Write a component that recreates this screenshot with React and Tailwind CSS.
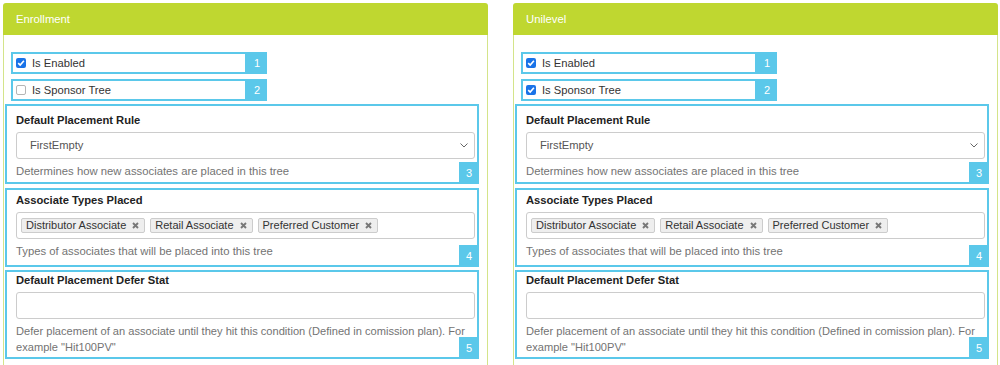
import React from 'react';

const font = { fontFamily: '"Liberation Sans", Arial, sans-serif' };

function Badge({ n, className = '' }) {
  return (
    <div className={`w-[20px] h-[22px] shrink-0 bg-[#5bc8ea] text-white text-[11px] flex items-center justify-center ${className}`}>
      {n}
    </div>
  );
}

function Check({ checked }) {
  if (!checked) {
    return <span className="w-[10px] h-[10px] shrink-0 rounded-[2px] border border-[#b5b5b5] bg-white inline-block" />;
  }
  return (
    <span className="w-[10px] h-[10px] shrink-0 rounded-[2px] bg-[#1a73e8] inline-flex items-center justify-center">
      <svg width="8" height="8" viewBox="0 0 8 8">
        <path d="M1.2 4.2 L3.2 6.1 L6.9 1.8" fill="none" stroke="white" strokeWidth="1.6" />
      </svg>
    </span>
  );
}

function CheckRow({ n, label, checked }) {
  return (
    <div className="flex shrink-0 ml-[6px]">
      <div className="w-[236px] h-[22px] border-2 border-[#5bc8ea] flex items-center pl-[3px] gap-[6px]">
        <Check checked={checked} />
        <span className="text-[11.2px] text-[#333]">{label}</span>
      </div>
      <Badge n={n} />
    </div>
  );
}

function Section({ n, className, children }) {
  return (
    <div className={`relative shrink-0 border-2 border-[#5bc8ea] pl-[9px] pr-[2px] ${className}`}>
      {children}
      <Badge n={n} className="absolute right-[-2px] bottom-[-2px]" />
    </div>
  );
}

function Tag({ text }) {
  return (
    <span className="h-[15px] flex items-center border border-[#ccc] bg-[#eee] rounded-[2px] pl-[4px] pr-[5px] text-[11px] text-[#333]">
      {text}
      <svg className="ml-[6px]" width="7" height="7" viewBox="0 0 7 7">
        <path d="M1 1 L6 6 M6 1 L1 6" stroke="#777" strokeWidth="1.9" />
      </svg>
    </span>
  );
}

function Panel({ title, sponsor }) {
  return (
    <div className="w-[485px] flex flex-col">
      <div className="h-[32px] shrink-0 bg-[#bfd730] rounded-t-[3px] flex items-center pl-[13px] text-white text-[11.3px]">
        {title}
      </div>
      <div className="flex-1 min-h-0 border-x border-[#d4e48a] pt-[17px] pl-[1px] pr-[8px] flex flex-col">
        <CheckRow n="1" label="Is Enabled" checked />
        <div className="h-[5px] shrink-0" />
        <CheckRow n="2" label="Is Sponsor Tree" checked={sponsor} />
        <div className="h-[3px] shrink-0" />
        <Section n="3" className="pt-[6px] pb-[3px]">
          <div className="text-[11.2px] leading-[16px] font-bold text-[#222]">Default Placement Rule</div>
          <div className="mt-[4px] h-[27px] border border-[#ccc] rounded-[3px] flex items-center justify-between pl-[13px] pr-[6px]">
            <span className="text-[11.2px] text-[#555]">FirstEmpty</span>
            <svg width="8" height="5" viewBox="0 0 8 5">
              <path d="M0.5 0.5 L4 4 L7.5 0.5" fill="none" stroke="#666" strokeWidth="1" />
            </svg>
          </div>
          <div className="mt-[4px] text-[11.3px] leading-[16px] text-[#737373]">Determines how new associates are placed in this tree</div>
        </Section>
        <div className="h-[4px] shrink-0" />
        <Section n="4" className="pt-[2px] pb-[6px]">
          <div className="text-[11.2px] leading-[16px] font-bold text-[#222]">Associate Types Placed</div>
          <div className="mt-[4px] h-[27px] border border-[#ccc] rounded-[3px] flex items-center gap-[5px] pl-[4px]">
            <Tag text="Distributor Associate" />
            <Tag text="Retail Associate" />
            <Tag text="Preferred Customer" />
          </div>
          <div className="mt-[4px] text-[11.3px] leading-[16px] text-[#737373]">Types of associates that will be placed into this tree</div>
        </Section>
        <div className="h-[3px] shrink-0" />
        <Section n="5" className="pt-0 pb-[2px]">
          <div className="text-[11.2px] leading-[16px] font-bold text-[#222]">Default Placement Defer Stat</div>
          <div className="mt-[4px] h-[27px] border border-[#ccc] rounded-[3px]" />
          <div className="mt-[4px] mr-[-2px] text-[11.1px] leading-[16px] text-[#737373]">
            Defer placement of an associate until they hit this condition (Defined in comission plan). For example "Hit100PV"
          </div>
        </Section>
      </div>
    </div>
  );
}

export default function App() {
  return (
    <div style={font} className="w-[1000px] h-[365px] bg-white overflow-hidden flex gap-[25px] pl-[3px] pt-[3px]">
      <Panel title="Enrollment" sponsor={false} />
      <Panel title="Unilevel" sponsor />
    </div>
  );
}
